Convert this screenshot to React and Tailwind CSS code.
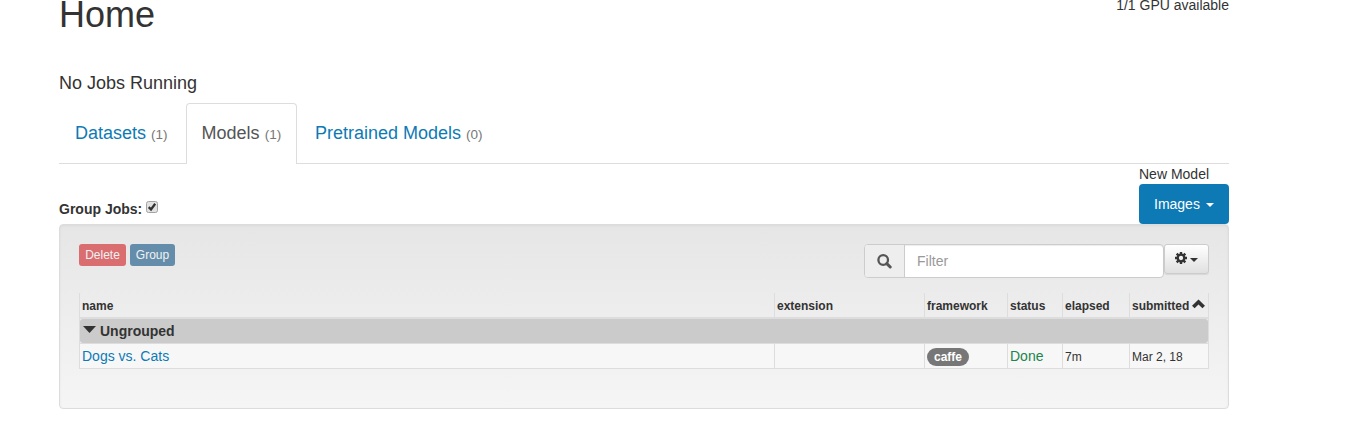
const columns = [
  { label: 'name', width: 'w-[695px]' },
  { label: 'extension', width: 'w-[150px]' },
  { label: 'framework', width: 'w-[83px]' },
  { label: 'status', width: 'w-[55px]' },
  { label: 'elapsed', width: 'w-[67px]' },
  { label: 'submitted', width: 'w-[80px]', sorted: true },
];

function Caret() {
  return <svg className="h-1 w-2 shrink-0" viewBox="0 0 8 4" fill="currentColor"><path d="M0 0h8L4 4z" /></svg>;
}

function Tab({ label, count, active, className }) {
  return (
    <div
      className={
        (active
          ? 'h-[61px] rounded-t-[4px] border border-b-0 border-[#ddd] bg-white pl-[14.6px] text-[#555] '
          : 'h-[61px] border border-transparent pl-[15px] text-[#0d7ab5] ') + className
      }
    >
      <div className="pt-[19px] text-[18px] leading-[20px] whitespace-nowrap">
        {label} <span className="text-[13.5px] leading-none text-[#777]">({count})</span>
      </div>
    </div>
  );
}

function SearchIcon() {
  return (
    <svg className="h-[15px] w-[15px]" viewBox="0 0 15 15" fill="none" stroke="#555">
      <circle cx="6.2" cy="6" r="4.8" strokeWidth="2.3" />
      <path d="M9.8 9.6l3.4 3.4" strokeWidth="3" strokeLinecap="round" />
    </svg>
  );
}

function CogIcon() {
  return (
    <svg className="-mt-[2px] h-3 w-3" viewBox="0 0 12 12" fill="none" stroke="#333">
      <circle cx="6" cy="6" r="3.3" strokeWidth="2.3" />
      <path
        strokeWidth="2.4"
        d="M6 0v2.4M6 9.6V12M0 6h2.4M9.6 6H12M1.7 1.7l1.7 1.7M8.6 8.6l1.7 1.7M10.3 1.7L8.6 3.4M3.4 8.6l-1.7 1.7"
      />
    </svg>
  );
}

function Checkbox() {
  return (
    <svg className="ml-1 h-[12px] w-[12px]" viewBox="0 0 12 12" role="checkbox" aria-checked="true">
      <rect x="0.5" y="0.5" width="11" height="11" rx="2" fill="#e2e2e2" stroke="#a3a3a3" />
      <path d="M2.7 6.1l2.3 2.3L9.2 2.8" fill="none" stroke="#333" strokeWidth="2.3" />
    </svg>
  );
}

export default function App() {
  return (
    <div
      className="h-[445px] overflow-hidden bg-white pl-[59px] text-[14px] leading-[20px] text-[#333]"
      style={{ fontFamily: '"Liberation Sans", Arial, sans-serif' }}
    >
      <div className="w-[1170px]">
        <header className="flex h-[73px] items-start justify-between">
          <h1 className="text-[36px] leading-[29.6px]">Home</h1>
          <div className="leading-[10px]">1/1 GPU available</div>
        </header>

        <h4 className="h-[30px] text-[18px] leading-[20px]">No Jobs Running</h4>

        <nav className="flex h-[61px] shadow-[inset_0_-1px_0_#ddd]">
          <Tab label="Datasets" count={1} className="mr-[2px] w-[125px]" />
          <Tab label="Models" count={1} active className="mr-[2px] w-[111px]" />
          <Tab label="Pretrained Models" count={0} className="w-[200px]" />
        </nav>

        <div className="flex h-[60px] justify-between">
          <div className="mt-[35px] flex h-[20px] font-bold">
            Group Jobs:
            <div className="pt-[2px]"><Checkbox /></div>
          </div>
          <div className="w-[90px]">
            <div className="h-[20px]">New Model</div>
            <button className="flex h-[40px] w-[90px] items-center gap-[6px] rounded-[4px] bg-[#0d7ab5] pl-[15px] text-white">
              Images <div className="pt-[2px]"><Caret /></div>
            </button>
          </div>
        </div>

        <section className="h-[185px] rounded-[4px] border border-[#dcdcdc] bg-linear-to-b from-[#e6e6e6] to-[#f5f5f5] px-[19px] pt-[19px] shadow-[inset_0_1px_3px_rgba(0,0,0,0.05)]">
          <div className="flex h-[49px] items-start justify-between">
            <div className="flex gap-1 text-[12px] leading-[22px] text-[#f2f2f2]">
              <button className="h-[22px] w-[47px] rounded-[3px] bg-[#d96d70]">Delete</button>
              <button className="h-[22px] w-[45px] rounded-[3px] bg-[#648dab]">Group</button>
            </div>
            <div className="flex items-start">
              <div className="flex h-[34px] w-[300px] rounded-[4px] border border-[#ccc] bg-white">
                <div className="flex w-[40px] items-center justify-center rounded-l-[3px] border-r border-[#ccc] bg-[#eee]">
                  <SearchIcon />
                </div>
                <div className="flex-1 rounded-r-[3px] pl-[12px] leading-[32px] text-[#999] shadow-[inset_0_1px_1px_rgba(0,0,0,0.075)]">
                  Filter
                </div>
              </div>
              <button className="flex h-[30px] w-[45px] items-center gap-[3px] rounded-[3px] border border-[#ccc] bg-linear-to-b from-white to-[#e0e0e0] pl-[10px] shadow-[0_1px_1px_rgba(0,0,0,0.08)]">
                <CogIcon />
                <div className="pt-[2px]"><Caret /></div>
              </button>
            </div>
          </div>

          <div className="w-[1130px] border-l border-[#ddd]">
            <div className="flex h-[26px] border-b-2 border-[#ddd] text-[12px] leading-[26px] font-bold">
              {columns.map((c) => (
                <div key={c.label} className={'flex shrink-0 border-r border-[#ddd] pl-[2px] last:w-[79px] ' + c.width}>
                  {c.label}
                  {c.sorted && (
                    <svg className="mt-[6px] ml-[3px] h-[10px] w-[13px] shrink-0" viewBox="0 0 13 10">
                      <path d="M1.3 8L6.5 3l5.2 5" fill="none" stroke="#333" strokeWidth="3.7" />
                    </svg>
                  )}
                </div>
              ))}
            </div>
            <div className="flex h-[25px] border-r border-b border-[#ddd]">
              <div className="flex flex-1 rounded-[3px] bg-[#cbcbcb] pl-[3px] leading-[24px] font-bold">
                <svg className="mt-[7px] mr-1 h-[7px] w-[13px]" viewBox="0 0 13 7">
                  <path d="M0 0h13L6.5 7z" fill="#333" />
                </svg>
                Ungrouped
              </div>
            </div>
            <div className="flex h-[25px] border-b border-[#ddd] bg-[#f7f7f7] leading-[24px]">
              <div className="w-[695px] border-r border-[#ddd] pl-[2px] text-[#0d7ab5]">Dogs vs. Cats</div>
              <div className="w-[150px] border-r border-[#ddd]" />
              <div className="w-[83px] border-r border-[#ddd] pt-[4px] pl-[2px]">
                <div className="h-[18px] w-[42px] rounded-[9px] bg-[#777] text-center text-[12px] leading-[18px] font-bold text-white">
                  caffe
                </div>
              </div>
              <div className="w-[55px] border-r border-[#ddd] pl-[2px] text-[#20854c]">Done</div>
              <div className="w-[67px] border-r border-[#ddd] pl-[2px] text-[12px] leading-[26px]">7m</div>
              <div className="w-[79px] border-r border-[#ddd] pl-[2px] text-[12px] leading-[26px]">Mar 2, 18</div>
            </div>
          </div>
        </section>
      </div>
    </div>
  );
}
